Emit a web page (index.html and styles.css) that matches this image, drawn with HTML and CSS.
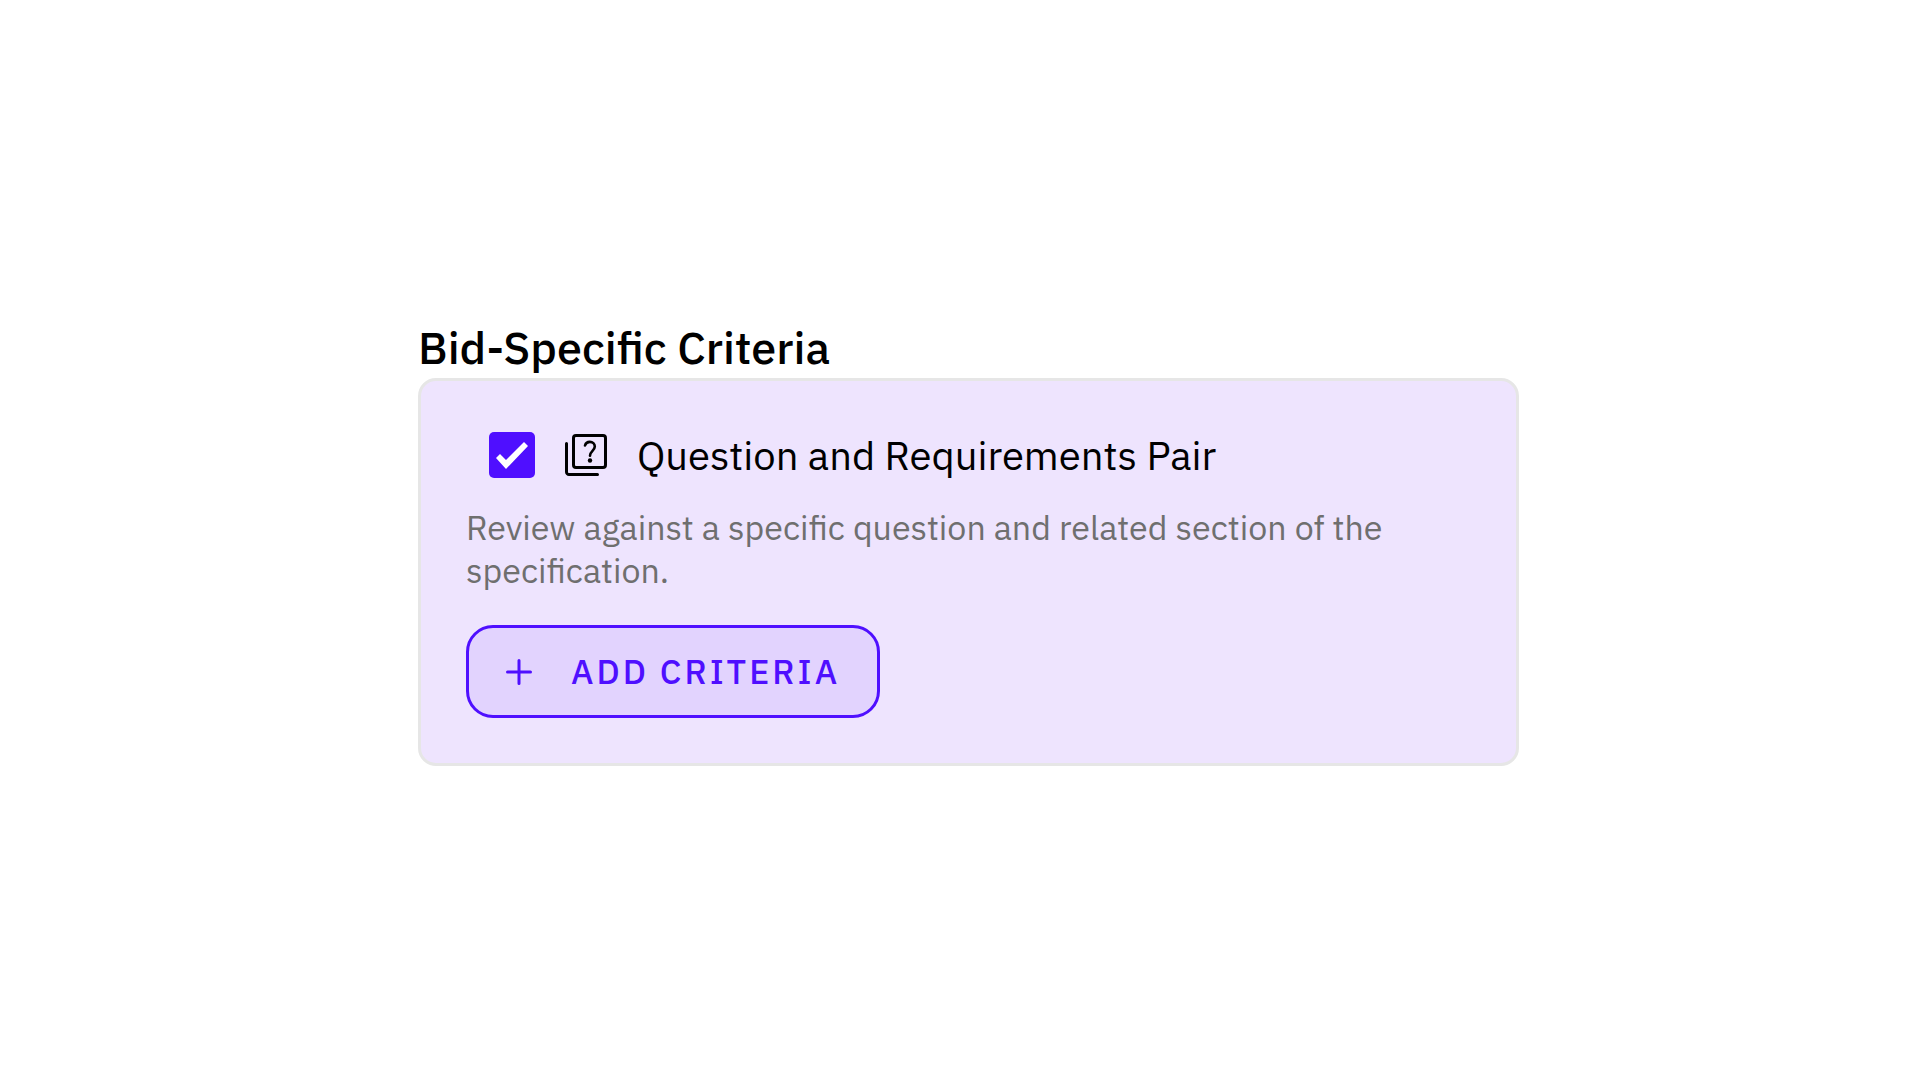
FILE: index.html
```
<!DOCTYPE html>
<html lang="en">
<head>
  <meta charset="UTF-8" />
  <meta name="viewport" content="width=device-width, initial-scale=1.0"/>
  <title>Bid-Specific Criteria</title>
  <link rel="stylesheet" href="styles.css">
</head>
<body>

  <main class="criteria">
    <h1>Bid-Specific Criteria</h1>

    <section class="card">
      <div class="option">
        <input type="checkbox" id="pair" checked>
        <label for="pair">
          <svg class="quiz-icon" viewBox="0 0 42 42" fill="none" stroke="#000" stroke-width="3" stroke-linecap="round" stroke-linejoin="round" aria-hidden="true">
            <rect x="8.500" y="1.500" width="32" height="32" rx="2.500"/>
            <path d="M1.500 9.500v28.500a2.500 2.500 0 0 0 2.500 2.500h28.500"/>
            <path d="M20 11.500c.6-2.300 2.400-3.600 4.800-3.600 2.900 0 5 1.900 5 4.700 0 4.100-4.800 4.500-4.800 9.200" stroke-width="2.600"/>
            <circle cx="25" cy="26.500" r="2.200" fill="#000" stroke="none"/>
          </svg>
          Question and Requirements Pair
        </label>
      </div>

      <p>Review against a specific question and related section of the specification.</p>

      <button type="button">
        <svg class="plus-icon" viewBox="0 0 26 26" stroke="currentColor" stroke-width="3" stroke-linecap="round" aria-hidden="true">
          <path d="M13 1.500v23M1.500 13h23"/>
        </svg>
        ADD CRITERIA
      </button>
    </section>
  </main>

</body>
</html>
```

FILE: styles.css
```
body {
  margin: 0;
  background: #fff;
  color: #000;
  font-family: 'IBM Plex Sans', Roboto, sans-serif;
}

.criteria {
  box-sizing: border-box;
  max-width: 1118px;
  margin: 0 auto;
  padding: 318px 0 40px 17px;
}

h1 {
  margin: 0 0 2px;
  font-size: 45px;
  line-height: 58px;
  font-weight: 500;
}

.card {
  padding: 45px;
  border: 3px solid #e6e6e6;
  border-radius: 18px;
  background: #eee4fe;
}

.option {
  display: flex;
  align-items: center;
  gap: 30px;
  margin-left: 23px;
  min-height: 58px;
}

.option input {
  appearance: none;
  flex: none;
  width: 46px;
  height: 46px;
  margin: 0;
  border-radius: 5px;
  background: #4f0fff;
  cursor: pointer;
}

.option input:not(:checked) {
  background: #fff;
}

/* white tick */
.option input:checked::before {
  content: "";
  display: block;
  width: 46px;
  height: 46px;
  background: #fff;
  clip-path: polygon(7px 26px, 11px 22px, 17px 28px, 35px 10px, 39px 14px, 17px 37px);
}

.option label {
  display: flex;
  align-items: center;
  gap: 30px;
  font-size: 40px;
  line-height: 52px;
}

.quiz-icon {
  flex: none;
  width: 42px;
  height: 42px;
}

p {
  margin: 22px 0 33px;
  color: #6f6f6f;
  font-size: 34px;
  line-height: 43px;
}

button {
  display: flex;
  align-items: center;
  gap: 39px;
  padding: 22px 37px;
  border: 3px solid #4f0fff;
  border-radius: 27px;
  background: #e2d3fe;
  color: #4f0fff;
  font-family: inherit;
  font-size: 34px;
  line-height: 43px;
  font-weight: 500;
  letter-spacing: 3px;
  cursor: pointer;
}

.plus-icon {
  flex: none;
  width: 26px;
  height: 26px;
}
```
